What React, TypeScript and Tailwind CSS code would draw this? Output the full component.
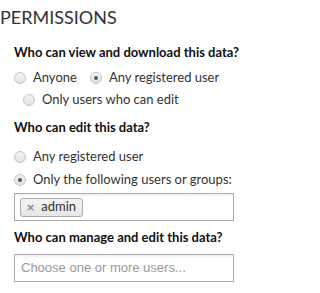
import React from "react";

function Radio({ checked, label }: { checked?: boolean; label: string }) {
  return (
    <span className="flex items-center">
      <span className="w-[12px] h-[12px] rounded-full border border-[#c4c4c4] bg-gradient-to-b from-[#f4f4f4] to-[#e2e2e2] flex items-center justify-center shrink-0">
        {checked && <span className="w-[4px] h-[4px] rounded-full bg-[#555]" />}
      </span>
      <span className="ml-[7px] text-[13px] text-[#333]">{label}</span>
    </span>
  );
}

export default function App() {
  return (
    <div className="w-[248px] h-[293px] bg-white font-['Lato',sans-serif] overflow-hidden">
      <div className="pt-[6px] text-[18px] leading-[22px] text-[#333]">PERMISSIONS</div>

      <div className="mt-[15px] pl-[14px] text-[13px] leading-[18px] font-bold text-[#111]">
        Who can view and download this data?
      </div>
      <div className="mt-[6px] pl-[14px] h-[22px] flex items-center gap-[13px]">
        <Radio label="Anyone" />
        <Radio checked label="Any registered user" />
      </div>
      <div className="pl-[23px] h-[22px] flex items-center">
        <Radio label="Only users who can edit" />
      </div>

      <div className="mt-[7px] pl-[14px] text-[13px] leading-[18px] font-bold text-[#111]">
        Who can edit this data?
      </div>
      <div className="mt-[10px] pl-[14px] h-[22px] flex items-center">
        <Radio label="Any registered user" />
      </div>
      <div className="mt-[1px] pl-[14px] h-[22px] flex items-center">
        <Radio checked label="Only the following users or groups:" />
      </div>

      <div className="mt-[2px] ml-[14px] w-[220px] h-[28px] border border-[#aaa] bg-gradient-to-b from-[#f2f2f2] from-[0%] to-white to-[15%] flex items-center px-[5px]">
        <span className="h-[19px] flex items-center rounded-[3px] border border-[#aaa] bg-gradient-to-b from-[#f4f4f4] to-[#e6e6e6] pl-[5px] pr-[6px]">
          <span className="text-[11px] leading-none text-[#888] font-bold font-['DejaVu_Sans',sans-serif]">×</span>
          <span className="ml-[6px] text-[13px] text-[#333]">admin</span>
        </span>
      </div>

      <div className="mt-[7px] pl-[14px] text-[13px] leading-[18px] font-bold text-[#111]">
        Who can manage and edit this data?
      </div>
      <div className="mt-[8px] ml-[14px] w-[220px] h-[28px] border border-[#aaa] bg-gradient-to-b from-[#f2f2f2] from-[0%] to-white to-[15%] flex items-center px-[6px]">
        <span className="text-[13px] text-[#999] font-['Liberation_Sans',Arial,sans-serif]">Choose one or more users...</span>
      </div>
    </div>
  );
}
